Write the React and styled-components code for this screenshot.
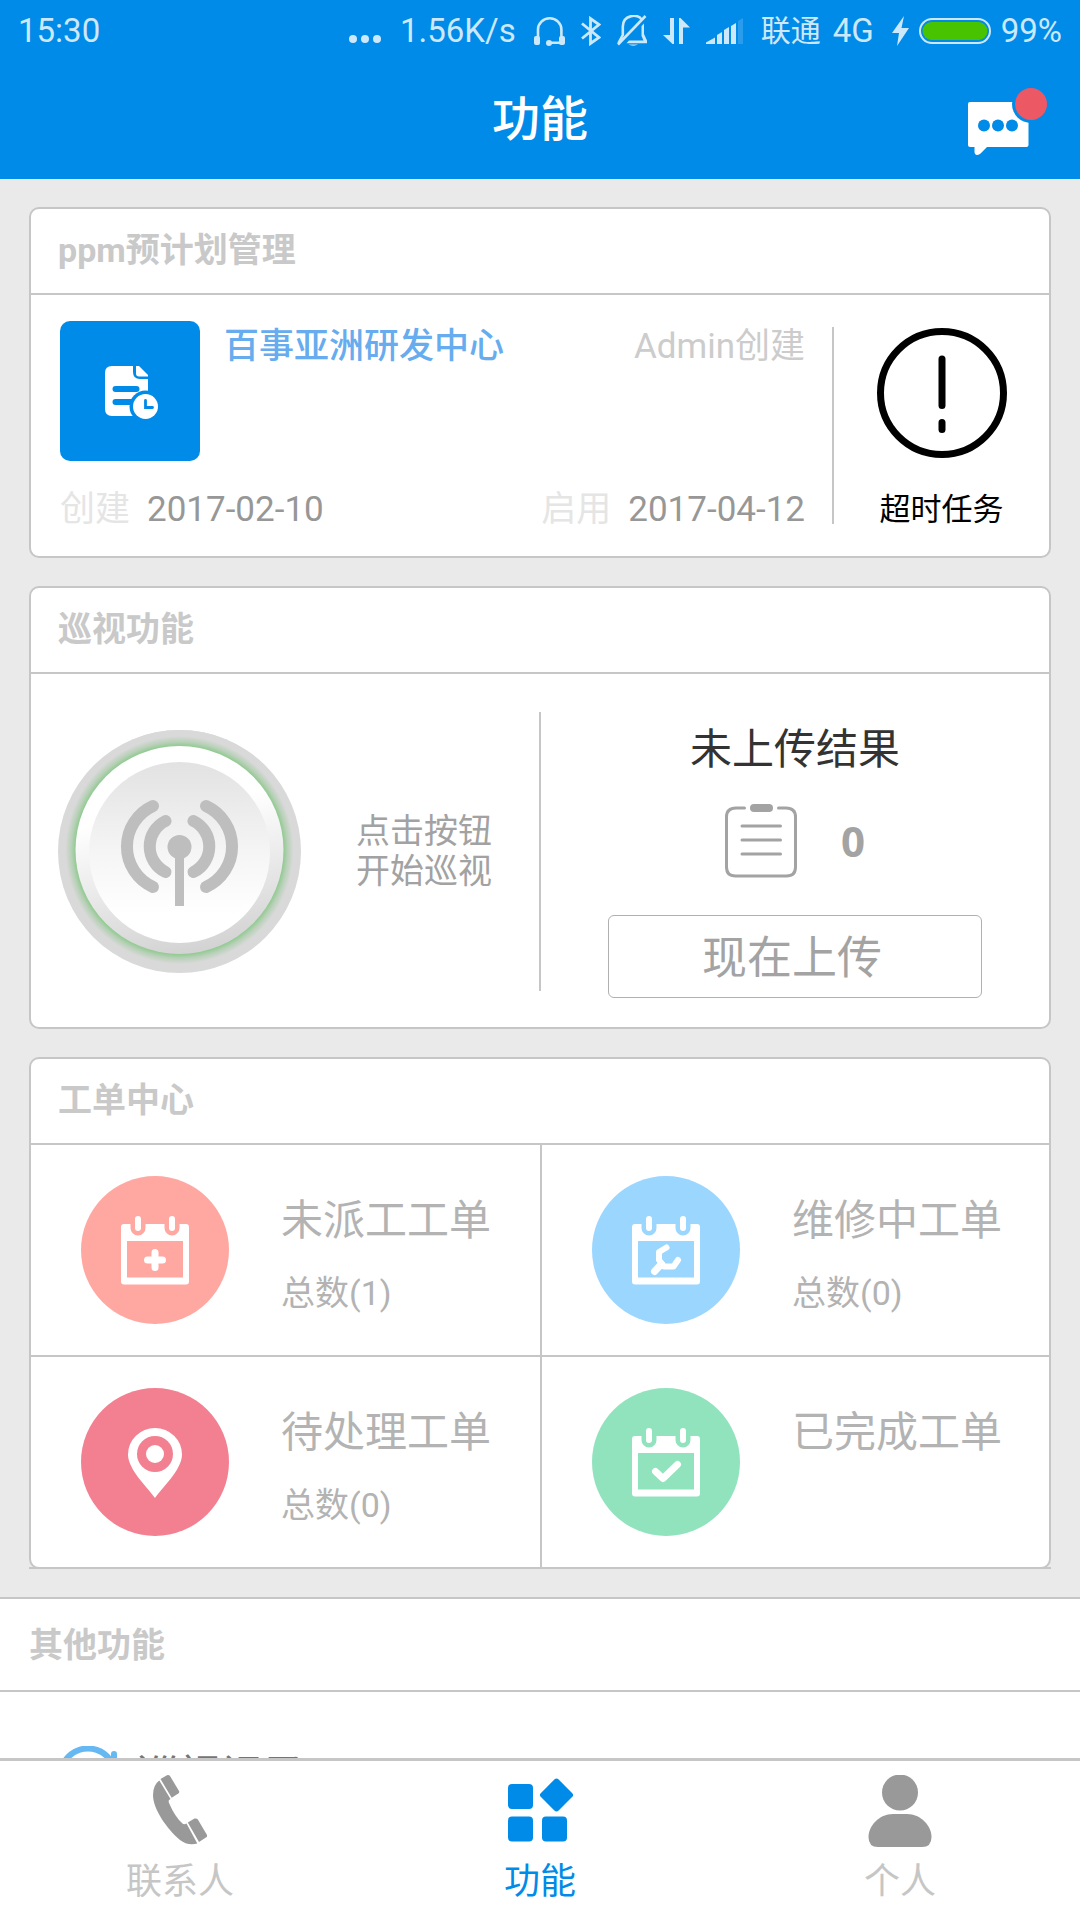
import React from "react";
import styled, { createGlobalStyle } from "styled-components";

const BLUE = "#008be8";
const LINE = "#c6c6c6";

const GlobalStyle = createGlobalStyle`
  * {
    box-sizing: border-box;
  }

  body {
    margin: 0;
    background: #eaeaea;
    font-family: Roboto, "Noto Sans CJK SC", sans-serif;
  }

  h1, h2, h3, p {
    margin: 0;
    font-weight: 400;
  }

  button {
    padding: 0;
    border: 0;
    background: none;
    font-family: inherit;
    cursor: pointer;
  }

  svg {
    display: block;
    flex: none;
  }
`;

/* ---------- status bar icons ---------- */

const DotsIcon = () => (
  <svg width="34" height="26" viewBox="0 0 34 26" fill="currentColor">
    <circle cx="5" cy="21" r="4" />
    <circle cx="17" cy="21" r="4" />
    <circle cx="29" cy="21" r="4" />
  </svg>
);

const HeadsetIcon = () => (
  <svg width="31" height="30" viewBox="0 0 31 30" fill="currentColor">
    <path
      d="M4 21V13.5A11.7 11.2 0 0 1 27.4 13.5V26.7H15"
      fill="none"
      stroke="currentColor"
      strokeWidth="2.6"
    />
    <rect x="0" y="20" width="6" height="9" rx="2" />
    <rect x="25" y="20" width="6" height="9" rx="2" />
    <circle cx="15" cy="27" r="3" />
  </svg>
);

const BluetoothIcon = () => (
  <svg width="20" height="30" viewBox="0 0 20 30" fill="none" stroke="currentColor" strokeWidth="2.8">
    <path d="M1 7.5L18 21.5L9.5 27.5V2.5L18 8.5L1 22.5" />
  </svg>
);

const MutedBellIcon = () => (
  <svg width="30" height="32" viewBox="0 0 30 32" fill="none" stroke="currentColor" strokeWidth="2.6">
    <path d="M1.500 28L5.800 20V11.500C6 -.8 21.500 -1.500 24.500 4.500" />
    <path d="M1 29.500L28.500 1" />
    <path d="M24.500 11L27 8.500V19L30 25.500V28.300H9.500L12 25.600H26.500L24.500 21Z" fill="currentColor" stroke="none" />
    <path d="M11.500 29.500H21A6 3 0 0 1 11.500 29.500Z" fill="currentColor" stroke="none" />
  </svg>
);

const TrafficIcon = () => (
  <svg width="27" height="26" viewBox="0 0 27 26" fill="currentColor">
    <path d="M7 0H11V26H9.500L0 17H7Z" />
    <path d="M16 26V0H17.500L27 9.500H20V26Z" />
  </svg>
);

const SignalIcon = () => (
  <svg width="37" height="26" viewBox="0 0 37 26" fill="currentColor">
    <path d="M0 26V24.500L9 19.500V26Z" />
    <path d="M11 26V17L16 14V26Z" />
    <path d="M18 26V12L23 9V26Z" />
    <path d="M25 26V8L30 5V26Z" />
    <path d="M32 26V3L37 0V26Z" opacity="0.2" />
  </svg>
);

const BoltIcon = () => (
  <svg width="17" height="30" viewBox="0 0 17 30" fill="currentColor">
    <path d="M12 0L0 17H7L5 30L17 12H9.500Z" />
  </svg>
);

const BatteryIcon = () => (
  <svg width="72" height="26" viewBox="0 0 72 26">
    <rect x="1" y="1" width="70" height="24" rx="12" fill="none" stroke="currentColor" strokeWidth="2" />
    <rect x="3.500" y="4" width="65" height="18" rx="9" fill="#48c300" />
  </svg>
);

/* ---------- page icons ---------- */

const MessageIcon = () => (
  <svg width="79" height="67" viewBox="0 0 79 67">
    <path
      d="M2 14H58.500Q60.500 14 60.500 16V57Q60.500 59 58.500 59H19L12 66Q7 68.500 6.500 64V59H2Q0 59 0 57V16Q0 14 2 14Z"
      fill="#fff"
    />
    <circle cx="16" cy="37.500" r="6" fill={BLUE} />
    <circle cx="30" cy="37.500" r="6" fill={BLUE} />
    <circle cx="44" cy="37.500" r="6" fill={BLUE} />
    <circle cx="63" cy="16" r="19" fill={BLUE} />
    <circle cx="63" cy="16" r="16" fill="#ec5864" />
  </svg>
);

const PlanIcon = () => (
  <svg width="54" height="54" viewBox="0 0 54 54">
    <path d="M7 0H28V6Q28 13 35 13H43V50H7Q0 50 0 43V7Q0 0 7 0Z" fill="#fff" />
    <path d="M31 0H34L43 9V10.500H34Q31 10.500 31 7.500Z" fill="#fff" />
    <path d="M10.500 23H31.500M10.500 36H30" stroke={BLUE} strokeWidth="6" strokeLinecap="round" />
    <circle cx="40.500" cy="40.500" r="16" fill={BLUE} />
    <circle cx="40.500" cy="40.500" r="12.500" fill="#fff" />
    <path d="M40.500 34.500V41.500H47.500" fill="none" stroke={BLUE} strokeWidth="2.800" strokeLinecap="round" />
  </svg>
);

const OverdueIcon = () => (
  <svg width="130" height="130" viewBox="0 0 130 130" fill="none" stroke="#000" strokeWidth="7" strokeLinecap="round">
    <circle cx="65" cy="65" r="61.500" />
    <path d="M65 31V77.500M65 94.500V101.500" />
  </svg>
);

const PatrolIcon = () => (
  <svg width="243" height="243" viewBox="0 0 243 243">
    <defs>
      <radialGradient id="glow" cx="0.500" cy="0.500" r="0.500">
        <stop offset="0.865" stopColor="#8fca8f" />
        <stop offset="0.900" stopColor="#b6d0b6" />
        <stop offset="0.950" stopColor="#d9d9d9" />
      </radialGradient>
      <linearGradient id="rim" x1="0.400" y1="0" x2="0.600" y2="1">
        <stop offset="0.300" stopColor="#fff" />
        <stop offset="1" stopColor="#d2d2d2" />
      </linearGradient>
      <linearGradient id="face" x1="0" y1="0" x2="0" y2="1">
        <stop offset="0" stopColor="#e2e2e2" />
        <stop offset="0.500" stopColor="#f5f5f5" />
        <stop offset="0.850" stopColor="#fff" />
      </linearGradient>
    </defs>
    <circle cx="121.500" cy="121.500" r="121.500" fill="#d9d9d9" />
    <circle cx="121.500" cy="120" r="120" fill="url(#glow)" />
    <circle cx="121.500" cy="120" r="104" fill="url(#rim)" />
    <circle cx="121.500" cy="122.500" r="90.500" fill="url(#face)" />
    <g fill="none" stroke="#bebebe" strokeWidth="12" strokeLinecap="round">
      <path d="M107.500 91A28.500 28.500 0 0 0 107.500 142" />
      <path d="M135.500 91A28.500 28.500 0 0 1 135.500 142" />
      <path d="M95 76A44.500 44.500 0 0 0 95 157" />
      <path d="M148 76A44.500 44.500 0 0 1 148 157" />
    </g>
    <circle cx="121.500" cy="117" r="12" fill="#bebebe" />
    <rect x="117" y="117" width="9" height="59" fill="#bebebe" />
  </svg>
);

const ClipboardIcon = () => (
  <svg width="72" height="74" viewBox="0 0 72 74" fill="none" stroke="#a3a3a3" strokeWidth="3" strokeLinecap="round">
    <path d="M19.500 4H11Q1.500 4 1.500 13V63Q1.500 72 10.500 72H61.500Q70.500 72 70.500 63V13Q70.500 4 61 4H53.500" />
    <path d="M17 22H55.500M17 36H55.500M17 50H55.500" />
    <rect x="25" y="0" width="23" height="8" rx="4" fill="#a3a3a3" stroke="none" />
  </svg>
);

const CalendarIcon = ({ color, children }) => (
  <svg width="148" height="148" viewBox="0 0 148 148">
    <circle cx="74" cy="74" r="74" fill={color} />
    <rect x="40" y="48" width="68" height="60.500" rx="3" fill="#fff" />
    <rect x="46" y="65" width="56" height="36.500" fill={color} />
    <path d="M57 42V52M91 42V52" stroke={color} strokeWidth="15" strokeLinecap="round" />
    <path d="M57 43V52M91 43V52" stroke="#fff" strokeWidth="6" strokeLinecap="round" />
    <g fill="none" stroke="#fff" strokeWidth="7" strokeLinecap="round" strokeLinejoin="round">
      {children}
    </g>
  </svg>
);

const NewOrderIcon = () => (
  <CalendarIcon color="#ffa8a2">
    <path d="M66.500 84H81.500M74 76.500V91.500" />
  </CalendarIcon>
);

const RepairOrderIcon = () => (
  <CalendarIcon color="#9bd6ff">
    <path d="M74.500 71.500L67 76V84L72 90.500H81.500L86 84" strokeWidth="6" />
    <path d="M69.500 88L62.500 95.500" />
  </CalendarIcon>
);

const DoneOrderIcon = () => (
  <CalendarIcon color="#91e3be">
    <path d="M63.500 83.500L71 90.500L85.500 76.500" />
  </CalendarIcon>
);

const PendingOrderIcon = () => (
  <svg width="148" height="148" viewBox="0 0 148 148">
    <circle cx="74" cy="74" r="74" fill="#f38091" />
    <path d="M74 110C68 101 47 82 47 66.500A27 26.500 0 0 1 101 66.500C101 82 80 101 74 110Z" fill="#fff" />
    <circle cx="74" cy="66" r="18" fill="#f38091" />
    <circle cx="74" cy="66" r="9" fill="#fff" />
  </svg>
);

const RecordIcon = () => (
  <svg width="64" height="64" viewBox="0 0 64 64" fill="none" stroke="#66b8f2" strokeWidth="6" strokeLinecap="round">
    <path d="M3 33A28 29 0 0 1 54 15M57 8V22H44" />
    <path d="M61 33A28 28 0 0 1 9 48" />
  </svg>
);

const PhoneIcon = () => (
  <svg width="54" height="70" viewBox="0 0 54 70" fill="#999">
    <path d="M6.300 5.500L17.500 24Q14.800 25 16 28Q22 42 29.500 48.500Q31 50 33.500 48.500L44.300 68.500C38 70 32 69 27 65C14 54 0 34 0 20Q0 10 6.300 5.500Z" />
    <path d="M7.500 4L14 .3Q16 -.4 17.300 1.500L26 16Q26.800 17.600 25.300 18.600L18.700 22.700Z" />
    <path d="M34.800 47.500L41.500 43.500Q43.800 43 45 44.800L54 60Q54.500 61.300 53.300 62.300L46 67Z" />
  </svg>
);

const GridIcon = () => (
  <svg width="66" height="70" viewBox="0 0 66 70" fill={BLUE}>
    <rect x="1" y="9" width="25" height="25" rx="4" />
    <rect x="1" y="41.500" width="25" height="25" rx="4" />
    <rect x="35" y="41.500" width="25" height="25" rx="4" />
    <rect x="37" y="7.500" width="25" height="25" rx="3" transform="rotate(45 49.500 20)" />
  </svg>
);

const PersonIcon = () => (
  <svg width="64" height="74" viewBox="0 0 64 74" fill="#999">
    <circle cx="32" cy="17.500" r="18" />
    <path d="M25 39H39C53 39 63.500 51 63.500 62Q63.500 72 54 72H10Q.5 72 .5 62C.5 51 11 39 25 39Z" />
  </svg>
);

/* ---------- screen ---------- */

const orders = [
  { name: "未派工工单", count: 1, Icon: NewOrderIcon },
  { name: "维修中工单", count: 0, Icon: RepairOrderIcon },
  { name: "待处理工单", count: 0, Icon: PendingOrderIcon },
  { name: "已完成工单", Icon: DoneOrderIcon },
];

const tabs = [
  { name: "联系人", Icon: PhoneIcon },
  { name: "功能", Icon: GridIcon, active: true },
  { name: "个人", Icon: PersonIcon },
];

const App = () => {
  return (
    <Screen>
      <GlobalStyle />
      <Header>
        <StatusBar>
          <span>15:30</span>
          <StatusGroup $gap={18}>
            <DotsIcon />
            <span>1.56K/s</span>
            <StatusGroup $gap={16}>
              <HeadsetIcon />
              <BluetoothIcon />
              <MutedBellIcon />
              <TrafficIcon />
              <SignalIcon />
            </StatusGroup>
            <StatusGroup $gap={12}>
              <Carrier>联通</Carrier>
              <span>4G</span>
            </StatusGroup>
            <StatusGroup $gap={10}>
              <BoltIcon />
              <BatteryIcon />
              <span>99%</span>
            </StatusGroup>
          </StatusGroup>
        </StatusBar>
        <TitleBar>
          <Title>功能</Title>
          <MessageButton aria-label="消息">
            <MessageIcon />
          </MessageButton>
        </TitleBar>
      </Header>

      <Content>
        <Card>
          <CardHead>ppm预计划管理</CardHead>
          <PlanBody>
            <Plan>
              <PlanTop>
                <PlanTile>
                  <PlanIcon />
                </PlanTile>
                <PlanName>百事亚洲研发中心</PlanName>
                <PlanAuthor>Admin创建</PlanAuthor>
              </PlanTop>
              <PlanDates>
                <PlanDate>
                  <DateLabel>创建</DateLabel>
                  <time>2017-02-10</time>
                </PlanDate>
                <PlanDate>
                  <DateLabel>启用</DateLabel>
                  <time>2017-04-12</time>
                </PlanDate>
              </PlanDates>
            </Plan>
            <Divider />
            <OverdueButton>
              <OverdueIcon />
              超时任务
            </OverdueButton>
          </PlanBody>
        </Card>

        <Card>
          <CardHead>巡视功能</CardHead>
          <PatrolBody>
            <PatrolStart>
              <button aria-label="开始巡视">
                <PatrolIcon />
              </button>
              <PatrolHint>
                点击按钮
                <br />
                开始巡视
              </PatrolHint>
            </PatrolStart>
            <Divider />
            <Upload>
              <UploadTitle>未上传结果</UploadTitle>
              <UploadCount>
                <ClipboardIcon />
                <span>0</span>
              </UploadCount>
              <UploadButton>现在上传</UploadButton>
            </Upload>
          </PatrolBody>
        </Card>

        <OrderCard>
          <CardHead>工单中心</CardHead>
          <OrderGrid>
            {orders.map(({ name, count, Icon }) => (
              <Order key={name} href="#">
                <Icon />
                <div>
                  <OrderName>{name}</OrderName>
                  {count !== undefined && <OrderCount>总数({count})</OrderCount>}
                </div>
              </Order>
            ))}
          </OrderGrid>
        </OrderCard>

        <Others>
          <OthersHead>其他功能</OthersHead>
          <OtherItem href="#">
            <RecordIcon />
            <span>巡视记录</span>
          </OtherItem>
        </Others>
      </Content>

      <TabBar>
        {tabs.map(({ name, Icon, active }) => (
          <Tab key={name} $active={active}>
            <TabIcon>
              <Icon />
            </TabIcon>
            {name}
          </Tab>
        ))}
      </TabBar>
    </Screen>
  );
};

const Screen = styled.div`
  display: flex;
  flex-direction: column;
  height: 100vh;
`;

const Header = styled.header`
  flex: none;
  background: ${BLUE};
`;

const StatusBar = styled.div`
  display: flex;
  align-items: center;
  justify-content: space-between;
  height: 62px;
  padding: 0 18px;
  color: #cce8fa;
  font-size: 33px;
  line-height: 40px;
`;

const StatusGroup = styled.div`
  display: flex;
  align-items: center;
  gap: ${(props) => props.$gap}px;
`;

const Carrier = styled.span`
  font-size: 30px;
`;

const TitleBar = styled.div`
  display: grid;
  grid-template-columns: 1fr auto 1fr;
  align-items: center;
  height: 117px;
  padding: 2px 33px 0;
`;

const Title = styled.h1`
  grid-column: 2;
  padding-bottom: 4px;
  color: #fff;
  font-size: 48px;
  font-weight: 500;
  line-height: 60px;
`;

const MessageButton = styled.button`
  justify-self: end;
`;

const Content = styled.main`
  flex: 1;
  display: flex;
  flex-direction: column;
  gap: 28px;
  min-height: 0;
  padding-top: 28px;
  overflow-y: auto;
  scrollbar-width: none;
`;

const Card = styled.section`
  flex: none;
  margin: 0 29px;
  background: #fff;
  border: 2px solid ${LINE};
  border-radius: 10px;
`;

const CardHead = styled.h2`
  padding: 0 27px 2px;
  border-bottom: 2px solid ${LINE};
  color: #c9c9c9;
  font-size: 34px;
  font-weight: 700;
  line-height: 82px;
`;

const Divider = styled.div`
  flex: none;
  width: 2px;
  background: ${LINE};
`;

const PlanBody = styled.div`
  display: flex;

  ${Divider} {
    margin: 32px 0;
  }
`;

const Plan = styled.div`
  flex: 1;
  padding: 26px 27px 23px 29px;
  font-size: 35px;
  line-height: 46px;
`;

const PlanTop = styled.div`
  display: flex;
  line-height: 52px;
`;

const PlanTile = styled.div`
  display: grid;
  place-items: center;
  width: 140px;
  height: 140px;
  margin-right: 24px;
  padding: 3px 0 0 3px;
  background: ${BLUE};
  border-radius: 10px;
`;

const PlanName = styled.h3`
  color: #66acee;
  font-size: 35px;
  font-weight: 500;
`;

const PlanAuthor = styled.p`
  margin-left: auto;
  color: #ccc;
`;

const PlanDates = styled.div`
  display: flex;
  justify-content: space-between;
  margin-top: 26px;
`;

const PlanDate = styled.p`
  display: flex;
  gap: 17px;
  color: #979797;
`;

const DateLabel = styled.span`
  color: #e5e5e5;
`;

const OverdueButton = styled.button`
  display: flex;
  flex-direction: column;
  align-items: center;
  gap: 29px;
  width: 215px;
  padding-top: 33px;
  color: #000;
  font-size: 31px;
  line-height: 46px;
`;

const PatrolBody = styled.div`
  display: grid;
  grid-template-columns: 1fr 2px 1fr;

  ${Divider} {
    margin: 38px 0 36px;
  }
`;

const PatrolStart = styled.div`
  display: flex;
  align-items: center;
  gap: 55px;
  padding: 2px 0 0 27px;
`;

const PatrolHint = styled.p`
  padding-bottom: 2px;
  color: #a2a2a2;
  font-size: 34px;
  line-height: 40px;
`;

const Upload = styled.div`
  display: flex;
  flex-direction: column;
  align-items: center;
  padding: 51px 0 29px;
`;

const UploadTitle = styled.h3`
  color: #333;
  font-size: 42px;
  line-height: 50px;
`;

const UploadCount = styled.p`
  display: flex;
  align-items: center;
  gap: 44px;
  margin: 29px 0 37px;
  color: #a3a3a3;
  font-family: "Open Sans", sans-serif;
  font-size: 42px;
  font-weight: 700;
  line-height: 50px;
`;

const UploadButton = styled.button`
  width: 374px;
  height: 83px;
  padding: 0 6px 4px 0;
  border: 1px solid #b0b0b0;
  border-radius: 6px;
  color: #a3a3a3;
  font-size: 45px;
`;

const OrderCard = styled(Card)`
  position: relative;

  /* the last grid line runs past the rounded corners */
  &::after {
    content: "";
    position: absolute;
    right: -2px;
    bottom: -2px;
    left: -2px;
    height: 2px;
    background: ${LINE};
  }
`;

const OrderGrid = styled.div`
  display: grid;
  grid-template-columns: 1fr 1fr;
`;

const Order = styled.a`
  display: flex;
  gap: 52px;
  padding: 31px 0 31px 50px;
  color: #b3b3b3;
  text-decoration: none;

  &:nth-child(even) {
    border-left: 2px solid ${LINE};
  }

  &:nth-child(n + 3) {
    border-top: 2px solid ${LINE};
  }
`;

const OrderName = styled.h3`
  margin: 20px 0 24px;
  font-size: 42px;
  line-height: 50px;
`;

const OrderCount = styled.p`
  font-size: 34px;
  line-height: 46px;
`;

const Others = styled.section`
  flex: none;
  background: #fff;
  border-top: 2px solid ${LINE};
`;

const OthersHead = styled(CardHead)`
  padding: 2px 29px 0;
  line-height: 89px;
`;

const OtherItem = styled.a`
  display: flex;
  gap: 16px;
  padding: 54px 57px;
  color: #757575;
  font-size: 42px;
  line-height: 60px;
  text-decoration: none;
`;

const TabBar = styled.nav`
  flex: none;
  display: grid;
  grid-template-columns: repeat(3, 1fr);
  background: #fff;
  border-top: 3px solid ${LINE};
`;

const Tab = styled.button`
  display: flex;
  flex-direction: column;
  align-items: center;
  padding: 14px 0 18px;
  color: ${(props) => (props.$active ? BLUE : "#c6c6c6")};
  font-size: 36px;
  line-height: 40px;
`;

const TabIcon = styled.span`
  display: grid;
  place-items: center;
  height: 70px;
  margin-bottom: 17px;
`;

export default App;
